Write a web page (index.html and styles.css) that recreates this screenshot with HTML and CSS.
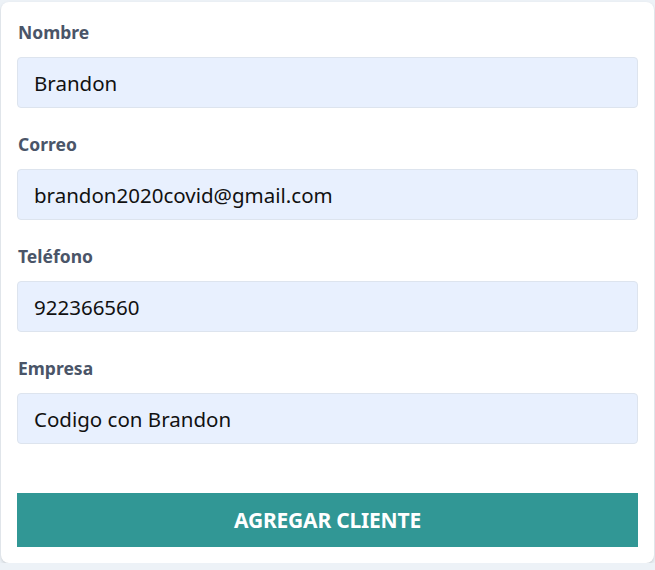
FILE: index.html
```html
<!DOCTYPE html>
<html lang="es">
<head>
<meta charset="utf-8">
<title>Agregar cliente</title>
<link rel="stylesheet" href="styles.css">
</head>
<body>
<form class="card">
  <div class="field">
    <label class="label" for="nombre">Nombre</label>
    <input class="input" id="nombre" type="text" value="Brandon">
  </div>
  <div class="field">
    <label class="label" for="correo">Correo</label>
    <input class="input" id="correo" type="email" value="brandon2020covid@gmail.com">
  </div>
  <div class="field">
    <label class="label" for="telefono">Teléfono</label>
    <input class="input" id="telefono" type="tel" value="922366560">
  </div>
  <div class="field">
    <label class="label" for="empresa">Empresa</label>
    <input class="input" id="empresa" type="text" value="Codigo con Brandon">
  </div>
  <button class="submit" type="button">AGREGAR CLIENTE</button>
</form>
</body>
</html>
```
FILE: styles.css
```css
html, body {
  margin: 0;
  background: #edf2f7;
}
body {
  padding: 2px 1px 0 1px;
  font-family: "Noto Sans", "Open Sans", sans-serif;
}
.card {
  background: #ffffff;
  border-radius: 8px;
  box-shadow: 0 2px 4px rgba(0, 0, 0, 0.1), 0 1px 2px rgba(0, 0, 0, 0.06);
  padding: 18px 16px 16px 16px;
  display: flex;
  flex-direction: column;
}
.field {
  display: flex;
  flex-direction: column;
  margin-bottom: 24px;
}
.label {
  font-size: 17.5px;
  line-height: 25px;
  font-weight: 700;
  color: #4a5568;
  margin-bottom: 12px;
  padding-left: 1px;
}
.input {
  box-sizing: border-box;
  height: 51px;
  width: 100%;
  margin: 0;
  padding: 0 16px;
  border: 1px solid #dde4ee;
  border-radius: 4px;
  background: #e8f0fe;
  font-family: inherit;
  font-size: 20.5px;
  color: #111111;
  outline: none;
}
.submit {
  margin-top: 25px;
  height: 54px;
  border: none;
  border-radius: 0;
  background: #319795;
  color: #ffffff;
  font-family: inherit;
  font-size: 21px;
  font-weight: 700;
  letter-spacing: -0.2px;
  cursor: pointer;
}
```
